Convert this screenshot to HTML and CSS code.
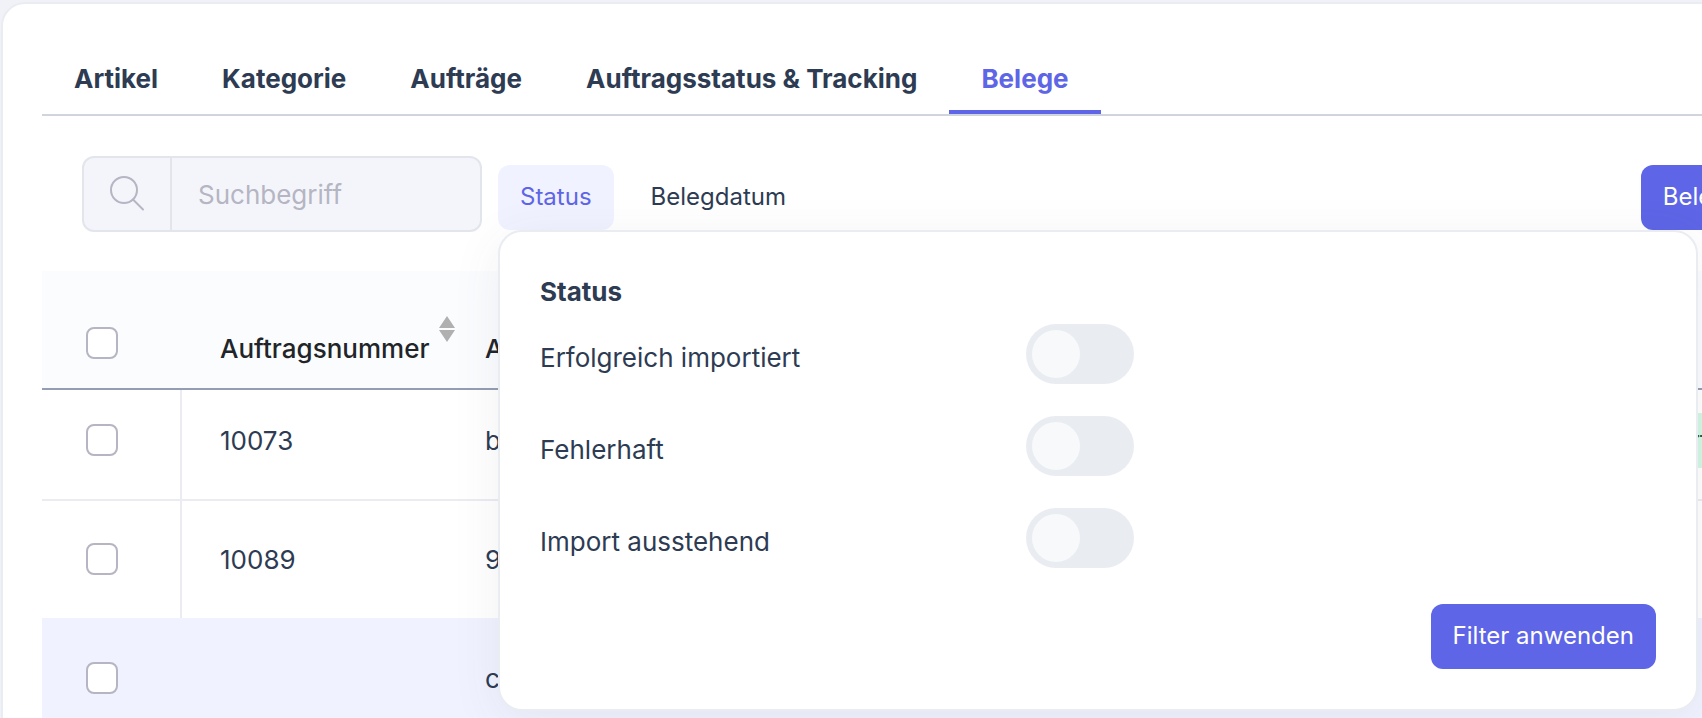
FILE: index.html
```
<!DOCTYPE html>
<html lang="de">
<head>
	<meta charset="utf-8">
	<title>Belege</title>
	<link rel="stylesheet" href="styles.css">
</head>
<body>
	<main class="card">
		<nav class="tabs">
			<a class="tab" href="#">Artikel</a>
			<a class="tab" href="#">Kategorie</a>
			<a class="tab" href="#">Aufträge</a>
			<a class="tab" href="#">Auftragsstatus &amp; Tracking</a>
			<a class="tab tab-active" href="#">Belege</a>
		</nav>

		<div class="toolbar">
			<div class="search">
				<label class="search-icon" for="search">
					<svg width="36" height="36" viewBox="0 0 36 36" fill="none" stroke="#b5b5c3" stroke-width="2" stroke-linecap="round">
						<circle cx="15" cy="14" r="13"/>
						<path d="M24 23.500L34 33.500"/>
					</svg>
				</label>
				<input class="search-input" id="search" type="text" placeholder="Suchbegriff">
			</div>
			<div class="filters">
				<button class="btn btn-light" type="button">Status</button>
				<button class="btn" type="button">Belegdatum</button>

				<!-- dropdown of the status filter -->
				<form class="filter-menu">
					<h2 class="filter-title">Status</h2>
					<div class="filter-list">
						<div class="filter-row">
							<label class="filter-label" for="imported">Erfolgreich importiert</label>
							<input class="switch" id="imported" type="checkbox">
						</div>
						<div class="filter-row">
							<label class="filter-label" for="failed">Fehlerhaft</label>
							<input class="switch" id="failed" type="checkbox">
						</div>
						<div class="filter-row">
							<label class="filter-label" for="pending">Import ausstehend</label>
							<input class="switch" id="pending" type="checkbox">
						</div>
					</div>
					<button class="btn btn-primary" type="button">Filter anwenden</button>
				</form>
			</div>
			<button class="btn btn-primary" type="button">Belege</button>
		</div>

		<table class="orders">
			<thead>
				<tr>
					<th class="col-check"><input class="check" type="checkbox" aria-label="Alle"></th>
					<th class="col-number">
						<span class="sortable">Auftragsnummer
							<svg class="sort" width="16" height="26" viewBox="0 0 16 26" fill="#b0b0b0"><path d="M8 0L16 12H0zM8 26L0 14H16z"/></svg>
						</span>
					</th>
					<th>A</th>
					<th class="col-status"></th>
				</tr>
			</thead>
			<tbody>
				<tr>
					<td class="col-check"><input class="check" type="checkbox" aria-label="10073"></td>
					<td>10073</td>
					<td>b</td>
					<td class="col-status"><span class="badge">Erfolgreich</span></td>
				</tr>
				<tr>
					<td class="col-check"><input class="check" type="checkbox" aria-label="10089"></td>
					<td>10089</td>
					<td>9</td>
					<td></td>
				</tr>
				<tr class="highlight">
					<td class="col-check"><input class="check" type="checkbox" aria-label="Auftrag"></td>
					<td></td>
					<td>c</td>
					<td></td>
				</tr>
			</tbody>
		</table>
	</main>
</body>
</html>
```

FILE: styles.css
```
* {
	box-sizing: border-box;
}

body {
	margin: 0;
	padding: 2px 0 0 1px;
	overflow: hidden;
	background: #f1f2f7;
	color: #2d3b53;
	font-family: Inter, "Liberation Sans", sans-serif;
	font-size: 26px;
	line-height: 39px;
}

button,
input {
	margin: 0;
	font: inherit;
	color: inherit;
}

/* the card is wider than the window and runs out on the right */
.card {
	margin-right: -142px;
	padding: 38px 39px 0;
	border: 2px solid #e9ecf1;
	border-radius: 24px;
	background: #fff;
}

.tabs {
	display: flex;
	border-bottom: 2px solid #d0d5dd;
}

.tab {
	padding: 17px 32px 12px;
	border-bottom: 4px solid transparent;
	color: #2d3b53;
	font-weight: 700;
	text-decoration: none;
}

.tab-active {
	border-color: #5e65e6;
	color: #5e65e6;
}

.toolbar {
	display: flex;
	align-items: center;
	gap: 16px;
	padding: 40px 40px 39px;
}

.search {
	display: flex;
	width: 400px;
	height: 76px;
	border: 2px solid #e3e5ed;
	border-radius: 12px;
	background: #f4f5fa;
}

.search-icon {
	display: flex;
	align-items: center;
	justify-content: center;
	width: 88px;
	border-right: 2px solid #e3e5ed;
}

.search-input {
	flex: 1;
	min-width: 0;
	padding: 0 26px;
	border: 0;
	outline: 0;
	background: none;
}

.search-input::placeholder {
	color: #b5b5c3;
}

.filters {
	position: relative;
	display: flex;
	flex: 1;
	gap: 15px;
	padding-top: 7px;
}

.btn {
	height: 65px;
	padding: 0 22px 2px;
	border: 0;
	border-radius: 12px;
	background: none;
	font-size: 24px;
}

.btn-light {
	background: #f0f2ff;
	color: #5e65e6;
}

.btn-primary {
	background: #5e65e6;
	color: #fff;
}

.toolbar > .btn-primary {
	margin-top: 7px;
}

.filter-menu {
	position: absolute;
	top: 100%;
	left: 0;
	z-index: 2;
	display: flex;
	flex-direction: column;
	align-items: flex-start;
	width: 1200px;
	padding: 40px;
	border: 2px solid #e9ecf1;
	border-radius: 24px;
	background: #fff;
	box-shadow: 0 10px 50px rgba(80, 80, 105, 0.08);
}

.filter-menu .btn-primary {
	align-self: flex-end;
}

.filter-title {
	margin: 0 0 13px;
	font-size: 26px;
	font-weight: 700;
}

.filter-list {
	display: grid;
	gap: 32px;
	margin-bottom: 36px;
}

.filter-row {
	display: grid;
	grid-template-columns: 486px auto;
}

.filter-label {
	padding-top: 14px;
}

.switch {
	width: 108px;
	height: 60px;
	padding: 6px;
	border-radius: 30px;
	background: #e9ecf1;
	appearance: none;
}

.switch::before {
	content: "";
	display: block;
	width: 48px;
	height: 48px;
	border-radius: 50%;
	background: #f8f9fb;
}

.switch:checked {
	background: #5e65e6;
}

.switch:checked::before {
	margin-left: auto;
}

.orders {
	width: 100%;
	border-collapse: separate;
	border-spacing: 0;
	table-layout: fixed;
}

.orders th {
	height: 119px;
	padding: 37px 38px 0;
	border-bottom: 2px solid #949db2;
	background: #fbfcfe;
	color: #212529;
	font-weight: 500;
	text-align: left;
}

.orders td {
	height: 119px;
	padding: 0 38px;
	border-bottom: 2px solid #ebebf2;
}

.orders tbody tr:first-child td {
	height: 111px;
	padding-bottom: 8px;
}

.orders tbody tr:nth-child(2) td {
	height: 117px;
	border-bottom: 0;
}

.orders .col-check {
	width: 140px;
	padding-left: 44px;
}

.orders th.col-check {
	padding-top: 29px;
}

.orders td.col-check {
	border-right: 2px solid #ebebf2;
}

.orders .col-number {
	width: 265px;
}

.orders th.col-number {
	padding-top: 24px;
}

.orders .col-status {
	width: 181px;
}

.orders .highlight td {
	height: 121px;
	border: 0;
	background: #f0f2ff;
}

.sortable {
	display: flex;
	align-items: flex-end;
	gap: 10px;
	height: 52px;
}

.sort {
	flex: none;
	align-self: flex-start;
}

.check {
	display: block;
	width: 32px;
	height: 32px;
	margin-bottom: 2px;
	border: 2px solid #b5b5c3;
	border-radius: 8px;
	background: #fff;
	appearance: none;
}

.badge {
	display: inline-block;
	padding: 8px 14px;
	border-radius: 8px;
	background: #d3f6e2;
	color: #1f5a3c;
}
```
